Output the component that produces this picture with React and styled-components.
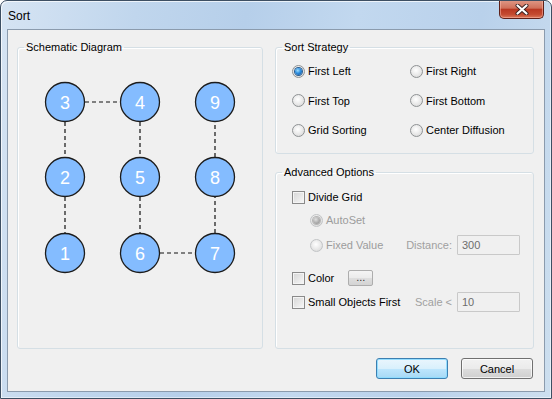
import React from "react";
import styled, { createGlobalStyle } from "styled-components";

const GlobalStyle = createGlobalStyle`
  html, body {
    margin: 0;
    padding: 0;
    background: #ffffff;
  }
  body {
    font-family: "Liberation Sans", Arial, sans-serif;
  }
`;

const Window = styled.div`
  width: 552px;
  height: 399px;
  box-sizing: border-box;
  border: 1px solid #3d4f63;
  border-radius: 7px 7px 0 0;
  background: linear-gradient(
    100deg,
    #d6e4f3 0%,
    #c0d6ed 22%,
    #b6cfea 40%,
    #c2d8ef 58%,
    #b9d1eb 78%,
    #cddfef 100%
  );
  box-shadow: inset 1px 1px 0 rgba(255, 255, 255, 0.7),
    inset -1px -1px 0 rgba(255, 255, 255, 0.5);
  display: flex;
  flex-direction: column;
  overflow: hidden;
`;

const TitleBar = styled.div`
  height: 28px;
  flex: none;
  display: flex;
  justify-content: space-between;
  align-items: flex-start;
  padding: 0 7px 0 7px;
`;

const Title = styled.div`
  margin-top: 8px;
  font-size: 12px;
  line-height: 15px;
  color: #000;
`;

const CloseButton = styled.div`
  width: 45px;
  height: 19px;
  box-sizing: border-box;
  margin-top: -1px;
  border: 1px solid #5e2019;
  border-top: none;
  border-radius: 0 0 5px 5px;
  background: linear-gradient(
    to bottom,
    #e09a88 0%,
    #d0705a 45%,
    #b93822 52%,
    #c44a30 80%,
    #d9785a 100%
  );
  box-shadow: inset 0 0 0 1px rgba(255, 190, 175, 0.5);
  display: flex;
  align-items: center;
  justify-content: center;
`;

const Panel = styled.div`
  flex: 1;
  margin: 0 6px 6px 6px;
  border: 1px solid #8b9bad;
  background: #f0f0f0;
  padding: 10px 10px 0 9px;
  display: flex;
  flex-direction: column;
  font-size: 11px;
  color: #000;
`;

const MainRow = styled.div`
  display: flex;
  gap: 12px;
  height: 309px;
`;

const Group = styled.fieldset`
  margin: 0;
  padding: 0;
  box-sizing: border-box;
  width: ${(p) => p.$w}px;
  height: ${(p) => p.$h}px;
  border: 1px solid #d5dfe5;
  border-radius: 3px;
  box-shadow: inset 1px 1px 0 #ffffff;
  min-inline-size: 0;
`;

const Legend = styled.legend`
  margin-left: 6px;
  padding: 0 2px;
  font-size: 11px;
  line-height: 14px;
  color: #000;
`;

const RightColumn = styled.div`
  display: flex;
  flex-direction: column;
  gap: 11px;
`;

const StrategyGrid = styled.div`
  display: grid;
  grid-template-columns: 118px 1fr;
  grid-auto-rows: 20px;
  row-gap: 9.5px;
  padding: 7px 0 0 16px;
`;

const OptionLabel = styled.label`
  display: flex;
  align-items: center;
  gap: 3px;
  white-space: nowrap;
  color: ${(p) => (p.$disabled ? "#9c9c9c" : "#000")};
`;

const RadioDot = styled.span`
  width: 13px;
  height: 13px;
  box-sizing: border-box;
  border-radius: 50%;
  border: 1px solid ${(p) => (p.$disabled ? "#c2c4c6" : "#8f9294")};
  background: radial-gradient(
    circle at 45% 40%,
    #ffffff 0%,
    #ececec 45%,
    #d3d3d3 100%
  );
  display: inline-flex;
  align-items: center;
  justify-content: center;
  flex: none;

  &::after {
    content: "";
    display: ${(p) => (p.$checked ? "block" : "none")};
    width: 7px;
    height: 7px;
    border-radius: 50%;
    background: ${(p) =>
      p.$disabled
        ? "radial-gradient(circle at 40% 35%, #e0e0e0 0%, #a8a8a8 60%, #8c8c8c 100%)"
        : "radial-gradient(circle at 40% 35%, #9fe0ff 0%, #2d8ee0 45%, #0c4a8e 100%)"};
    box-shadow: 0 0 0 1px ${(p) => (p.$disabled ? "#b5b5b5" : "#2a5d8f")};
  }
`;

const CheckBox = styled.span`
  width: 13px;
  height: 13px;
  box-sizing: border-box;
  border: 1px solid #8a8a8a;
  background: linear-gradient(135deg, #d6d6d6 0%, #e8e8e8 55%, #f8f8f8 100%);
  box-shadow: inset 0 0 0 1px #f4f4f4;
  flex: none;
`;

const AdvancedBody = styled.div`
  display: flex;
  flex-direction: column;
  padding: 0 13px 0 16px;
`;

const OptRow = styled.div`
  display: flex;
  align-items: center;
  height: 20px;
  margin-top: ${(p) => p.$mt}px;
  padding-left: ${(p) => p.$indent || 0}px;
`;

const FieldSide = styled.div`
  margin-left: auto;
  display: flex;
  align-items: center;
  gap: 5px;
`;

const FieldLabel = styled.span`
  color: #a0a0a0;
`;

const TextBox = styled.div`
  width: 63px;
  height: 20px;
  box-sizing: border-box;
  border: 1px solid #c9c9c9;
  border-radius: 1px;
  background: #f0f0f0;
  color: #6d6d6d;
  padding: 0 4px;
  display: flex;
  align-items: center;
`;

const SmallButton = styled.div`
  margin-left: 14px;
  width: 25px;
  height: 16px;
  box-sizing: border-box;
  border: 1px solid #adadad;
  border-radius: 2px;
  background: linear-gradient(to bottom, #f4f4f4 0%, #ebebeb 50%, #dedede 51%, #d4d4d4 100%);
  display: flex;
  align-items: flex-end;
  justify-content: center;
  padding-bottom: 2px;
  font-size: 11px;
  line-height: 11px;
  color: #333;
`;

const ButtonRow = styled.div`
  display: flex;
  justify-content: flex-end;
  gap: 13px;
  margin-top: 9px;
  padding-right: 1px;
`;

const DialogButton = styled.div`
  width: 72px;
  height: 21px;
  box-sizing: border-box;
  border-radius: 3px;
  border: 1px solid ${(p) => (p.$default ? "#3c7fb1" : "#707070")};
  background: ${(p) =>
    p.$default
      ? "linear-gradient(to bottom, #eaf6fd 0%, #d9f0fc 50%, #bee6fd 51%, #a7d9f5 100%)"
      : "linear-gradient(to bottom, #f2f2f2 0%, #ebebeb 50%, #dddddd 51%, #cfcfcf 100%)"};
  box-shadow: inset 0 0 0 1px
    ${(p) => (p.$default ? "rgba(140, 220, 255, 0.9)" : "rgba(255, 255, 255, 0.7)")};
  display: flex;
  align-items: center;
  justify-content: center;
  font-size: 11px;
  color: #000;
`;

// snake ordering of the schematic nodes
const nodes = [
  { n: 3, x: 47, y: 48 },
  { n: 4, x: 122, y: 48 },
  { n: 9, x: 197, y: 48 },
  { n: 2, x: 47, y: 123 },
  { n: 5, x: 122, y: 123 },
  { n: 8, x: 197, y: 123 },
  { n: 1, x: 47, y: 199 },
  { n: 6, x: 122, y: 199 },
  { n: 7, x: 197, y: 199 },
];

const links = [
  [47, 143, 47, 179],
  [47, 68, 47, 103],
  [67, 48, 102, 48],
  [122, 68, 122, 103],
  [122, 143, 122, 179],
  [142, 199, 177, 199],
  [197, 179, 197, 143],
  [197, 103, 197, 68],
];

function Diagram() {
  return (
    <svg width="246" height="290" viewBox="0 0 246 290" style={{ display: "block" }}>
      {links.map(([x1, y1, x2, y2], i) => (
        <line
          key={i}
          x1={x1}
          y1={y1}
          x2={x2}
          y2={y2}
          stroke="#111"
          strokeWidth="1.2"
          strokeDasharray="4 3"
        />
      ))}
      {nodes.map((c) => (
        <g key={c.n}>
          <circle cx={c.x} cy={c.y} r="19.5" fill="#84bcff" stroke="#1c1c1c" strokeWidth="1.3" />
          <text
            x={c.x}
            y={c.y + 6.5}
            textAnchor="middle"
            fontSize="18"
            fontFamily="'Liberation Sans', Arial, sans-serif"
            fill="#ffffff"
          >
            {c.n}
          </text>
        </g>
      ))}
    </svg>
  );
}

function CloseGlyph() {
  return (
    <svg width="14" height="11" viewBox="0 0 14 11">
      <path d="M2.5 1.5 L11.5 9.5 M11.5 1.5 L2.5 9.5" stroke="#3a2222" strokeWidth="4" strokeLinecap="round" />
      <path d="M2.5 1.5 L11.5 9.5 M11.5 1.5 L2.5 9.5" stroke="#ffffff" strokeWidth="2.2" strokeLinecap="round" />
    </svg>
  );
}

function Radio({ checked, disabled, children }) {
  return (
    <OptionLabel $disabled={disabled}>
      <RadioDot $checked={checked} $disabled={disabled} />
      {children}
    </OptionLabel>
  );
}

function Check({ children }) {
  return (
    <OptionLabel>
      <CheckBox />
      {children}
    </OptionLabel>
  );
}

export default function App() {
  return (
    <>
      <GlobalStyle />
      <Window>
        <TitleBar>
          <Title>Sort</Title>
          <CloseButton>
            <CloseGlyph />
          </CloseButton>
        </TitleBar>
        <Panel>
          <MainRow>
            <Group $w={248} $h={309}>
              <Legend>Schematic Diagram</Legend>
              <Diagram />
            </Group>
            <RightColumn>
              <Group $w={259} $h={114}>
                <Legend>Sort Strategy</Legend>
                <StrategyGrid>
                  <Radio checked>First Left</Radio>
                  <Radio>First Right</Radio>
                  <Radio>First Top</Radio>
                  <Radio>First Bottom</Radio>
                  <Radio>Grid Sorting</Radio>
                  <Radio>Center Diffusion</Radio>
                </StrategyGrid>
              </Group>
              <Group $w={259} $h={184}>
                <Legend>Advanced Options</Legend>
                <AdvancedBody>
                  <OptRow $mt={8}>
                    <Check>Divide Grid</Check>
                  </OptRow>
                  <OptRow $mt={3} $indent={18}>
                    <Radio checked disabled>AutoSet</Radio>
                  </OptRow>
                  <OptRow $mt={5} $indent={18}>
                    <Radio disabled>Fixed Value</Radio>
                    <FieldSide>
                      <FieldLabel>Distance:</FieldLabel>
                      <TextBox>300</TextBox>
                    </FieldSide>
                  </OptRow>
                  <OptRow $mt={13}>
                    <Check>Color</Check>
                    <SmallButton>...</SmallButton>
                  </OptRow>
                  <OptRow $mt={4}>
                    <Check>Small Objects First</Check>
                    <FieldSide>
                      <FieldLabel>Scale &lt;</FieldLabel>
                      <TextBox>10</TextBox>
                    </FieldSide>
                  </OptRow>
                </AdvancedBody>
              </Group>
            </RightColumn>
          </MainRow>
          <ButtonRow>
            <DialogButton $default>OK</DialogButton>
            <DialogButton>Cancel</DialogButton>
          </ButtonRow>
        </Panel>
      </Window>
    </>
  );
}
